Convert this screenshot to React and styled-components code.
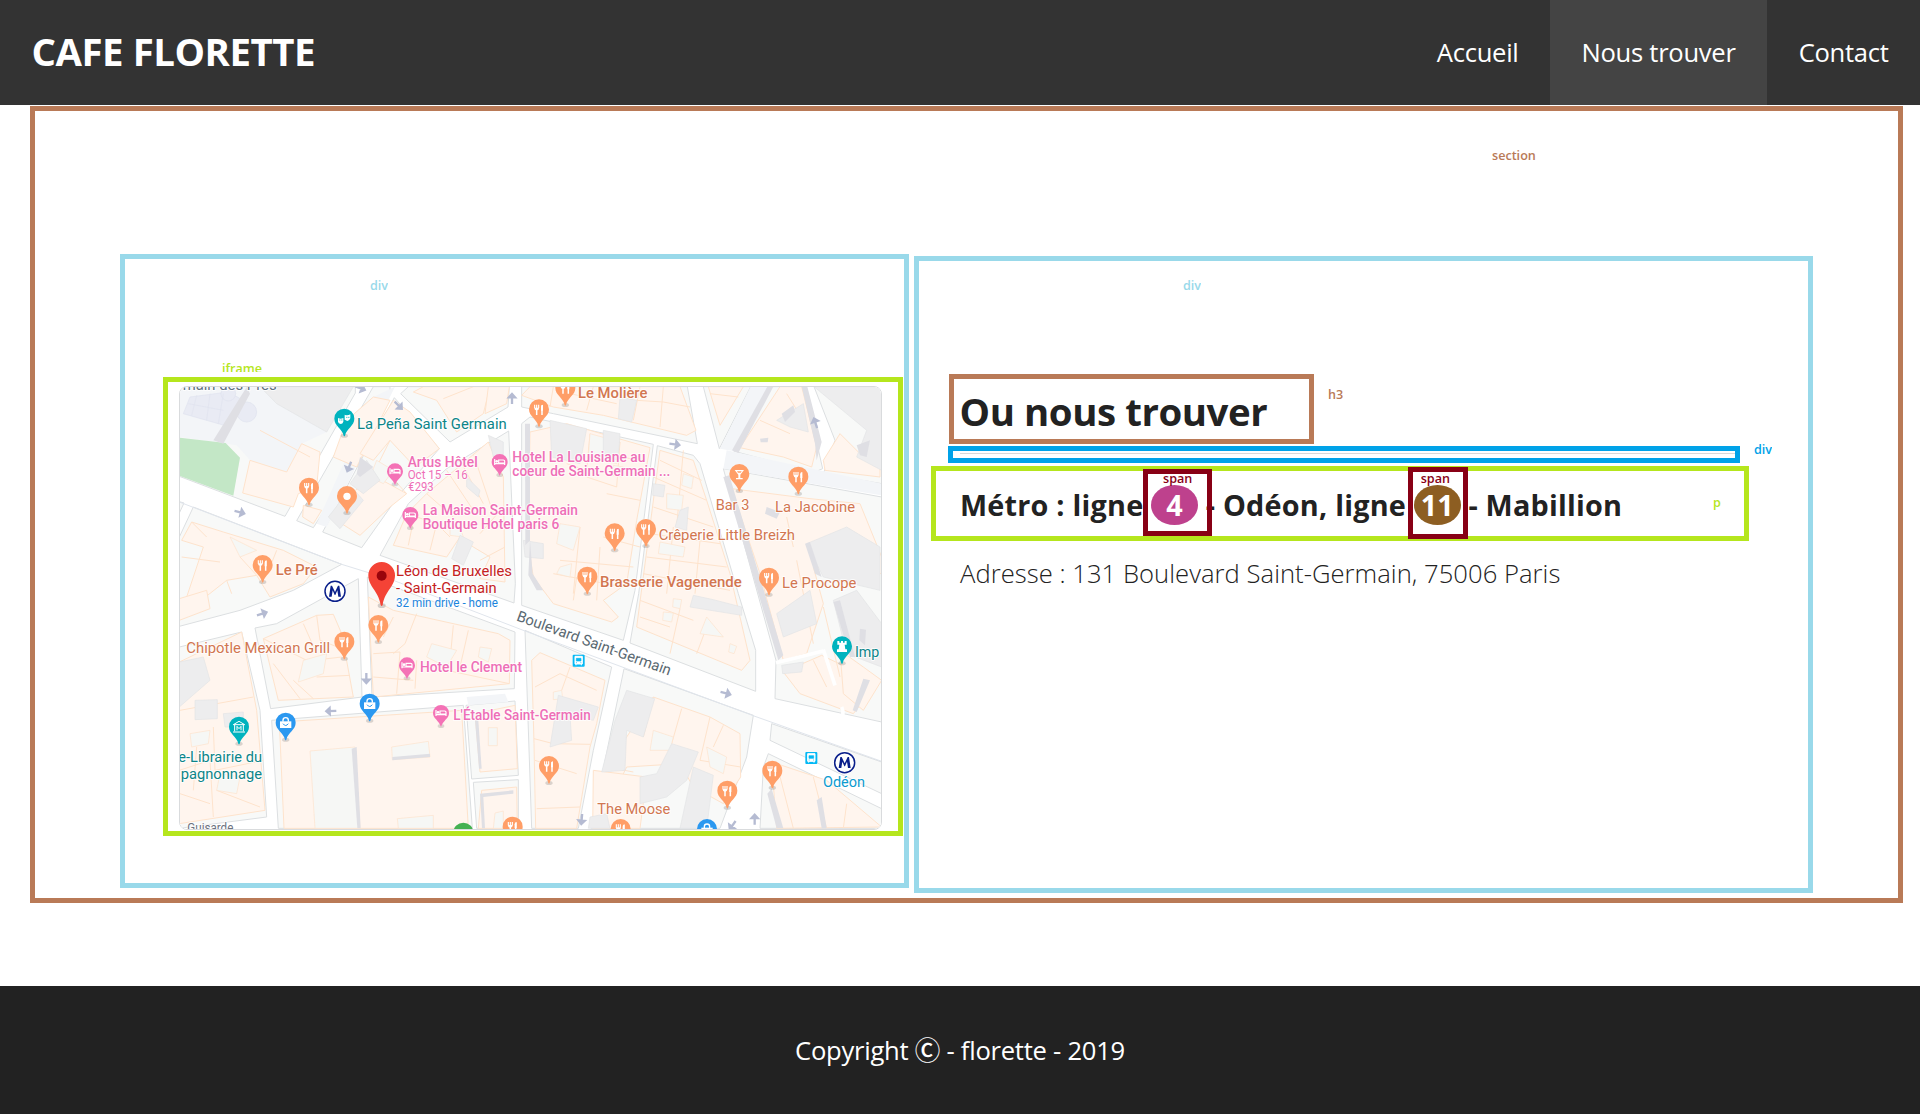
import React from "react";
import styled, { createGlobalStyle } from "styled-components";

const color = {
  brown: "#b97a57",
  sky: "#99d9ea",
  lime: "#b5e61d",
  blue: "#00a2e8",
  wine: "#880015",
};

const GlobalStyle = createGlobalStyle`
  *, *::before, *::after { box-sizing: border-box; }
  body {
    margin: 0;
    background: #fff;
    color: #222;
    font-family: "Open Sans", "Noto Sans", sans-serif;
    font-size: 25.6px;
  }
`;

const Page = styled.div`
  display: flex;
  flex-direction: column;
  height: 1114px;
  overflow: hidden;
`;

const Header = styled.header`
  display: flex;
  justify-content: space-between;
  height: 105px;
  flex: none;
  background: #333;
  color: #fff;
`;

const Logo = styled.h1`
  margin: 0;
  padding-left: 31.5px;
  font-size: 38.4px;
  letter-spacing: -0.47px;
  line-height: 103px;
`;

const Nav = styled.nav`
  display: flex;
`;

const NavLink = styled.a`
  padding: 0 31.4px 0 31.6px;
  letter-spacing: -0.28px;
  line-height: 106px;
  color: #fff;
  background: ${(p) => (p.$active ? "#444" : "transparent")};
`;

const Frame = styled.div`
  position: relative;
  border: 5px solid ${(p) => color[p.$tone]};
`;

const Section = styled(Frame).attrs({ as: "section" })`
  display: flex;
  align-items: flex-start;
  gap: 5px;
  width: 1873px;
  height: 797px;
  flex: none;
  margin: 1px 0 0 30px;
  padding: 143px 85px 0;
`;

const MapColumn = styled(Frame)`
  width: 789px;
  height: 634px;
  padding: 118px 0 0 38px;
`;

const InfoColumn = styled(Frame)`
  width: 899px;
  height: 637px;
  margin-top: 2px;
  padding: 113px 0 0 12px;
`;

const MapFrame = styled(Frame)`
  width: 740px;
  height: 459px;
  padding: 4px 11px;
`;

const MapCanvas = styled.svg`
  display: block;
  width: 703px;
  height: 444px;
  border: 1px solid #d9dbdd;
  border-radius: 8px;
  font-family: Roboto, sans-serif;
`;

const Title = styled(Frame).attrs({ as: "h3" })`
  width: 365px;
  height: 70px;
  margin: 0 0 0 18px;
  padding-left: 5.5px;
  font-size: 38.4px;
  letter-spacing: -0.42px;
  line-height: 64px;
`;

const RuleBox = styled(Frame)`
  width: 792px;
  height: 17px;
  margin: 2px 0 0 17px;
  padding: 2px 0 0 7px;
`;

const Rule = styled.div`
  height: 1px;
  background: #d8d8d8;
`;

const Metro = styled(Frame).attrs({ as: "p" })`
  width: 818px;
  height: 75px;
  margin: 3px 0 0;
  padding-left: 24px;
  font-size: 28.8px;
  font-weight: 700;
  letter-spacing: 0.22px;
  line-height: 67px;
  white-space: pre;
`;

const Line = styled.span`
  position: relative;
  display: inline-block;
  width: 47px;
  height: 40px;
  border-radius: 50%;
  background: ${(p) => p.$bg};
  color: #fff;
  line-height: 40px;
  letter-spacing: 0;
  text-align: center;
`;

const LineFrame = styled.span`
  position: absolute;
  left: ${(p) => p.$box[0]}px;
  top: ${(p) => p.$box[1]}px;
  width: ${(p) => p.$box[2]}px;
  height: ${(p) => p.$box[3]}px;
  border: 5px solid ${color.wine};
`;

const Tag = styled.span`
  position: absolute;
  left: ${(p) => p.$x}px;
  top: ${(p) => p.$y}px;
  height: ${(p) => p.$h || 18}px;
  overflow: hidden;
  color: ${(p) => color[p.$tone]};
  font-size: 12.6px;
  font-weight: 650;
  letter-spacing: 0;
  line-height: 18px;
  white-space: nowrap;
`;

const Address = styled.p`
  margin: 15px 0 0 29px;
  font-weight: 340;
  letter-spacing: 0.04px;
  line-height: 36px;
`;

const Footer = styled.footer`
  height: 128px;
  margin-top: 83px;
  flex: none;
  background: #222;
  color: #fff;
  letter-spacing: -0.26px;
  line-height: 130px;
  text-align: center;
`;

const CopyMark = styled.span`
  font-family: "Noto Sans CJK JP", "DejaVu Sans", sans-serif;
  font-weight: 500;
  line-height: 1;
`;

/* Map geometry: every unit is a third of a CSS pixel. */
const blocks = [
  "58,79 586,79 586,98 375,468 58,348",
  "640,79 690,79 690,100 500,440 460,502 410,481",
  "703,112 838,265 720,400 605,562 488,515",
  "745,79 1048,79 1044,140 870,245 722,100",
  "1046,212 1066,670 1062,728 660,585 745,430 860,325",
  "100,440 545,612 400,690 240,750 58,798 58,530",
  "58,424 72,428 58,458",
  "285,803 350,790 595,655 606,1010 332,1045",
  "58,860 245,815 300,1050 320,1370 58,1404",
  "622,650 1065,815 1063,985 636,1010",
  "335,1080 910,1035 937,1404 355,1404",
  "918,1035 1065,1022 1075,1245 935,1256",
  "940,1266 1075,1258 1075,1404 950,1404",
  "1095,810 1355,920 1300,1170 1255,1404 1115,1404",
  "1392,925 1780,1065 1760,1190 1680,1404 1293,1404",
  "1085,190 1110,170 1480,252 1425,690 1390,840 1085,735",
  "1492,256 1600,285 1620,310 1735,700 1787,870 1787,993 1410,848 1436,700",
  "1085,79 1582,79 1612,250 1180,160 1085,140",
  "1630,79 1772,79 1678,265",
  "1720,272 1828,79 1932,79 1988,325 1960,337",
  "1962,79 2165,79 2165,370 1990,340 2025,240",
  "1690,325 2165,410 2165,1085 1845,1015 1848,900",
  "1835,1090 2165,1205 2165,1300 1830,1140",
  "1825,1180 2165,1345 2165,1404 1800,1404 1810,1220",
];

const buildings = [
  "270,300 380,335 425,250 480,275 470,380 415,400 400,440 248,398",
  "640,110 690,120 590,320 520,290 560,180",
  "750,155 838,265 765,320 690,240 640,300 600,280 700,120",
  "640,345 740,400 690,440 600,525 545,490 575,400",
  "430,435 485,450 460,490 428,470",
  "790,79 990,79 970,160 890,215 830,120 760,95",
  "985,79 1048,79 1040,130 975,160",
  "985,245 1030,350 1035,665 960,655 990,590 940,560 900,530 860,590 700,555 740,460 800,400",
  "95,485 190,515 370,570 470,620 430,670 330,710 290,645 200,660 60,770 130,560 65,540",
  "58,715 140,690 150,745 58,780",
  "310,835 470,765 520,762 545,820 580,1010 355,1020",
  "625,710 700,750 1015,820 1050,840 1048,970 640,1010",
  "58,905 245,815 290,1050 315,1350 58,1390",
  "358,1085 905,1050 925,1404 372,1404",
  "945,1060 1065,1035 1072,1225 960,1235",
  "965,1290 1070,1280 1072,1404 955,1404",
  "1115,900 1140,877 1335,960 1310,1090 1290,1160 1250,1404 1127,1404 1122,1150",
  "1480,1010 1650,1070 1740,1120 1742,1250 1690,1330 1600,1280 1560,1210 1400,1220 1310,1404 1340,1220",
  "1300,1230 1460,1250 1440,1404 1298,1404",
  "1110,215 1220,190 1470,262 1430,480 1400,670 1330,720 1375,770 1355,785 1180,730 1120,650 1105,560",
  "1500,270 1600,300 1640,420 1710,640 1770,900 1745,930 1430,800",
  "1110,79 1560,79 1608,210 1580,225 1330,165 1180,140 1085,105",
  "1645,79 1750,79 1680,195",
  "1740,262 1860,79 1925,79 1970,260 1955,320 1870,290",
  "1715,385 1950,415 2100,430 2165,590 2165,640 1960,620 1990,730 1940,880 1870,900 1800,640",
  "1870,935 1985,885 2080,930 2160,960 2080,1060 1920,1000",
  "1835,1205 2000,1260 2165,1400 1850,1404",
  "1990,300 2040,220 2110,290 2160,310 2160,350 1995,330",
  "2040,870 2110,920 2165,960 2110,1050 2050,1000",
];

/* Courtyards cut out of the buildings. */
const yards = [
  "430,900 500,880 490,940 415,965",
  "815,850 890,870 860,920 800,890",
  "960,860 995,865 985,905 955,890",
  "450,1172 585,1160 600,1404 465,1404",
  "695,1160 805,1143 810,1190 697,1198",
  "712,1375 820,1365 820,1404 715,1404",
  "985,1102 1012,1102 1012,1156 985,1156",
  "1005,1358 1030,1352 1030,1404 1000,1404",
  "1180,995 1205,990 1208,1015 1180,1018",
  "1200,620 1235,610 1230,650 1190,640",
  "1290,220 1380,245 1370,310 1285,290",
  "1360,315 1390,320 1385,350 1355,345",
  "1520,400 1570,405 1565,450 1520,445",
  "1570,340 1600,350 1595,385 1565,375",
  "1500,545 1575,560 1570,590 1495,580",
  "1640,770 1690,830 1620,820",
  "1540,715 1565,718 1560,745 1538,740",
  "1510,755 1540,758 1535,785 1508,780",
  "1710,850 1730,858 1722,880 1706,875",
  "1480,1110 1540,1130 1530,1170 1470,1170",
  "1640,1160 1700,1190 1690,1240 1650,1220",
  "1200,490 1260,500 1240,570 1190,550",
  "90,1120 150,1110 145,1150 95,1160",
  "180,1240 240,1250 230,1300 170,1290",
  "870,500 900,500 910,530 870,525",
  "210,530 290,570 240,590",
  "650,300 700,330 670,370 630,350",
];

const grey = [
  "300,79 580,79 500,215 350,130",
  "985,225 1030,245 1030,285 1000,290",
  "920,350 960,390 955,410 920,380",
  "900,525 940,545 910,615 875,595",
  "58,905 130,890 150,960 58,1040",
  "105,1020 172,1018 172,1075 105,1078",
  "190,1060 250,1055 250,1100 195,1100",
  "620,300 660,360 610,400 570,370",
  "505,470 575,380 610,420 540,505",
  "1195,1005 1315,1040 1300,1080 1230,1065 1235,1140 1170,1160",
  "1400,990 1484,1015 1450,1130 1400,1110 1395,1230 1325,1235 1365,1080",
  "1535,1150 1615,1175 1580,1260 1520,1310 1440,1330 1440,1250 1490,1240",
  "1600,1220 1660,1245 1640,1404 1560,1404",
  "1290,1370 1340,1360 1350,1404 1285,1404",
  "1600,705 1660,718 1745,740 1745,765 1590,740",
  "1380,110 1430,120 1415,185 1375,175",
  "1330,210 1380,220 1375,300 1330,285",
  "1480,370 1515,375 1510,410 1478,405",
  "1560,450 1585,440 1580,510 1545,500",
  "1170,180 1280,205 1260,310 1175,290",
  "1090,540 1150,550 1150,595 1095,590",
  "1962,79 2165,79 2165,330 2090,290 2120,210",
  "1940,550 2060,500 2160,560 2160,690 1990,650",
  "1850,760 1950,690 1970,790 1870,830",
  "1865,915 1930,905 1925,935 1868,940",
  "2020,720 2090,690 2165,790 2165,920 2060,880",
  "1850,180 1930,130 1945,215 1890,200",
];

const seams = [
  "M300,210 L450,290 M690,240 L640,340 M740,400 L690,345 M850,115 L940,79",
  "M740,460 L830,490 L870,530 M800,400 L880,470 M860,330 L940,450 M900,300 L970,430 M940,280 L1000,460 M1030,440 L960,520 M1035,560 L960,600 M760,480 L745,555 M830,490 L810,570",
  "M65,590 L180,605 M240,590 L290,645 M95,485 L140,530 M350,570 L330,620 M200,660 L215,700",
  "M310,835 L440,900 M430,790 L470,880 M470,765 L480,840 L560,870 M400,960 L460,1015 M460,900 L545,890 M470,950 L570,945 M340,910 L420,1015",
  "M700,770 L670,830 M770,760 L735,850 L700,880 M880,795 L870,900 M925,810 L900,920 M640,880 L720,875 L710,1000 M640,950 L760,960 M770,900 L765,985 M860,930 L1048,970",
  "M58,1230 L150,1200 L160,1370 M160,1100 L165,1230 L310,1200 M170,1290 L300,1340 M60,1050 L280,1010 M60,1300 L150,1330 M110,1160 L100,1290",
  "M1125,980 L1200,940 L1310,990 M1122,1135 L1180,1150 L1290,1152 M1125,1200 L1250,1240 M1130,1345 L1260,1340 M1205,990 L1230,920",
  "M1480,1010 L1450,1130 M1565,1045 L1535,1150 M1650,1070 L1620,1200 L1742,1220 M1690,1095 L1660,1160 M1340,1220 L1420,1235",
  "M1290,220 L1280,330 L1220,310 M1380,245 L1370,380 L1280,350 M1430,300 L1350,280 M1440,420 L1340,400 M1440,560 L1330,530 M1420,620 L1200,600 M1260,500 L1240,700 M1320,560 L1310,720 M1180,640 L1390,680 M1240,720 L1250,650",
  "M1500,300 L1625,360 M1480,350 L1640,420 M1480,440 L1660,500 M1470,520 L1680,550 M1460,590 L1700,620 M1450,640 L1710,690 M1440,720 L1600,780 M1570,270 L1550,500 M1540,500 L1520,700 M1620,540 L1605,700 M1560,745 L1530,880 M1640,800 L1610,880 M1440,770 L1530,800",
  "M1180,79 L1170,140 M1300,79 L1280,150 M1440,79 L1420,180 M1510,79 L1500,200 M1510,125 L1590,140 M1430,120 L1510,125 M1230,100 L1370,130",
  "M1650,100 L1735,110 M1800,180 L1890,220 M1880,100 L1930,180 M1880,470 L1900,560 M1910,600 L1960,850 M1990,740 L2040,950 M1960,900 L2000,980",
  "M1850,1210 L1900,1404 M1960,1250 L2000,1404 M2060,1330 L2050,1404",
];

/* Long thin wall shadows. */
const shades = [
  "1095,190 1110,190 1110,540 1096,555",
  "1110,540 1118,640 1150,690 1130,690 1105,645",
  "1690,350 1708,345 1870,885 1855,900",
  "1716,270 1822,79 1840,79 1735,278",
  "1925,79 1942,79 1985,245 1970,300 1965,250",
  "945,1080 955,1080 965,1225 957,1225",
  "960,1300 1060,1290 1060,1300 970,1310 975,1404 966,1404",
  "575,1165 590,1160 602,1404 592,1404",
  "697,1190 810,1180 810,1190 697,1200",
  "1822,1300 1835,1285 1870,1404 1850,1404",
  "1970,1320 1985,1310 2000,1404 1985,1404",
  "2110,955 2130,960 2090,1055 2078,1050",
  "1800,235 1825,232 1823,246 1802,246",
  "1865,160 1900,135 1905,155 1875,185",
  "2090,255 2130,240 2120,290 2100,285",
  "1820,440 1860,455 1850,475 1815,460",
  "1935,550 1950,545 1985,650 1965,640",
  "2020,725 2040,720 2085,890 2070,890",
  "2100,805 2118,808 2115,855 2098,840",
  "600,290 640,320 600,350 590,340",
  "160,240 260,80 270,100 190,250",
];

const arrows = [
  [602, 84, 20], [716, 136, 45], [567, 320, 112], [240, 456, 15],
  [1056, 114, -90], [307, 760, -18], [619, 955, 90], [512, 1052, 178],
  [1545, 252, 8], [1966, 187, -108], [1698, 999, 15], [1265, 1378, 95],
  [1784, 1376, -90], [1717, 1396, 125],
];

const PIN = "#ff9e67";
const PINK = "#f472b6";
const TEAL = "#00b3be";
const BLUE = "#2b98f0";

const pins = [
  [447, 383, PIN, "food"], [561, 408, PIN, "dot"], [308, 615, PIN, "food"],
  [553, 176, TEAL, "mask"], [1137, 148, PIN, "food"], [1216, 84, PIN, "food"],
  [1738, 342, PIN, "bar"], [1915, 350, PIN, "food"], [1458, 507, PIN, "food"],
  [1364, 520, PIN, "food"], [1282, 650, PIN, "food"], [1827, 653, PIN, "food"],
  [655, 795, PIN, "food"], [553, 845, PIN, "food"], [629, 1031, BLUE, "bag"],
  [377, 1088, BLUE, "bag"], [237, 1100, TEAL, "museum"], [2046, 859, TEAL, "rook"],
  [1167, 1218, PIN, "food"], [1837, 1232, PIN, "food"], [1702, 1292, PIN, "food"],
  [1382, 1407, PIN, "food"], [1058, 1400, PIN, "food"], [1641, 1407, BLUE, "bag"],
  [910, 1418, "#45b152", "dot"],
];

const hotels = [[705, 333], [1019, 305], [751, 464], [741, 915], [843, 1058]];

const ORANGE_TEXT = "#d27650";
const PINK_TEXT = "#ee6fb7";
const TEAL_TEXT = "#0c8589";

/* [text, x, baseline, width, size, colour, weight] */
const labels = [
  ["La Peña Saint Germain", 591, 207, 449, 45, TEAL_TEXT, 400],
  ["Artus Hôtel", 743, 321, 210, 42, PINK_TEXT, 500],
  ["Oct 15 – 16", 743, 357, 180, 38, PINK_TEXT, 400],
  ["€293", 745, 392, 76, 38, PINK_TEXT, 400],
  ["Hotel La Louisiane au", 1057, 306, 399, 42, PINK_TEXT, 500],
  ["coeur de Saint-Germain ...", 1057, 346, 474, 42, PINK_TEXT, 500],
  ["La Maison Saint-Germain", 788, 464, 466, 43, PINK_TEXT, 500],
  ["Boutique Hotel paris 6", 788, 507, 410, 43, PINK_TEXT, 500],
  ["Le Pré", 347, 645, 126, 45, ORANGE_TEXT, 500],
  ["Léon de Bruxelles", 708, 648, 348, 45, "#c5221f", 400],
  ["- Saint-Germain", 708, 699, 302, 45, "#c5221f", 400],
  ["32 min drive - home", 708, 741, 306, 36, "#1a84dc", 400],
  ["Le Molière", 1254, 112, 208, 44, ORANGE_TEXT, 500],
  ["Bar 3", 1667, 449, 101, 45, ORANGE_TEXT, 400],
  ["La Jacobine", 1845, 456, 240, 45, ORANGE_TEXT, 400],
  ["Crêperie Little Breizh", 1496, 538, 409, 45, ORANGE_TEXT, 400],
  ["Brasserie Vagenende", 1320, 681, 425, 44, ORANGE_TEXT, 500],
  ["Le Procope", 1866, 683, 223, 45, ORANGE_TEXT, 400],
  ["Chipotle Mexican Grill", 79, 877, 431, 45, ORANGE_TEXT, 400],
  ["Hotel le Clement", 780, 935, 306, 43, PINK_TEXT, 500],
  ["L'Étable Saint-Germain", 880, 1078, 412, 43, PINK_TEXT, 500],
  ["e-Librairie du", 55, 1206, 251, 45, TEAL_TEXT, 400],
  ["pagnonnage", 62, 1257, 244, 45, TEAL_TEXT, 400],
  ["The Moose", 1312, 1362, 219, 45, ORANGE_TEXT, 400],
  ["Imp", 2085, 890, 73, 45, TEAL_TEXT, 400],
  ["Odéon", 1989, 1281, 126, 45, "#0c9bd0", 400],
  ["main des Prés", 68, 90, 282, 44, "#607080", 400],
  ["Guisarde", 82, 1416, 138, 38, "#6b7280", 400],
];

const glyphs = {
  food: (
    <g fill="none" stroke="#fff">
      <path d="M-13,-15 V-5 M-7,-15 V-5 M-1,-15 V-5" strokeWidth="3.4" />
      <path d="M-14.5,-6 H0.5 Q0,2 -7,2 Q-14,2 -14.5,-6 Z" fill="#fff" stroke="none" />
      <path d="M-7,0 V16 M9,16 V-13" strokeWidth="4.5" />
      <path d="M6,3 V-8 Q7,-15 12,-15 V3 Z" fill="#fff" stroke="none" />
    </g>
  ),
  dot: <circle r="11" fill="#fff" />,
  bar: <path d="M-14,-13 H14 L3,1 V11 H10 V15 H-10 V11 H-3 V1 Z M-7,-9 L-4,-5 H4 L7,-9 Z" fill="#fff" fillRule="evenodd" />,
  mask: (
    <g fill="#fff">
      <path d="M-19,-3 Q-11,1 -3,-3 V8 Q-5,15 -11,15 Q-18,14 -19,8 Z" />
      <path d="M1,-13 Q9,-9 18,-14 V-2 Q16,5 9,6 L1,2 Z" />
      <path d="M-15,3 H-12 M-9,3 H-6 M6,-5 H9 M12,-5 H15" stroke={TEAL} strokeWidth="3" />
    </g>
  ),
  bag: (
    <g fill="none">
      <path d="M-17,-5 H17 V15 H-17 Z" fill="#fff" />
      <path d="M-8,-4 V-8 A8,8 0 0 1 8,-8 V-4" stroke="#fff" strokeWidth="4" />
      <path d="M-8,2 Q0,13 8,2" stroke={BLUE} strokeWidth="3" />
    </g>
  ),
  museum: (
    <g fill="none" stroke="#fff" strokeWidth="3">
      <path d="M-17,-7 L0,-17 L17,-7 Z M-13,-7 V13 M13,-7 V13 M-18,15 H18 M-6,10 V-2 L0,5 L6,-2 V10" />
    </g>
  ),
  rook: <path d="M-14,-17 H-8 V-12 H-3 V-17 H3 V-12 H8 V-17 H14 V-6 H8 L10,8 H15 V16 H-15 V8 H-10 L-8,-6 H-14 Z" fill="#fff" />,
};

function Pin({ x, y, fill, glyph }) {
  return (
    <g transform={`translate(${x} ${y})`}>
      <ellipse cy="50" rx="11" ry="6" fill="#555" opacity=".22" />
      <path d="M0,-31 A30,30 0 0 1 30,-1 C30,21 7,27 2,50 Q0,54 -2,50 C-7,27 -30,21 -30,-1 A30,30 0 0 1 0,-31 Z" fill={fill} />
      {glyphs[glyph]}
    </g>
  );
}

function HotelPin({ x, y }) {
  return (
    <g transform={`translate(${x} ${y})`}>
      <ellipse cy="39" rx="10" ry="6" fill="#555" opacity=".2" />
      <path d="M0,-24 A24,24 0 0 1 24,0 C24,17 6,22 0,42 C-6,22 -24,17 -24,0 A24,24 0 0 1 0,-24 Z" fill={PINK} />
      <path d="M-15,-9 V9 M-15,5 H15 M15,9 V-3 Q15,-6 11,-6 H-3 V3 H15" fill="none" stroke="#fff" strokeWidth="3.5" />
      <circle cx="-9" cy="-2" r="4" fill="#fff" />
    </g>
  );
}

function MetroMark({ x, y }) {
  return (
    <g transform={`translate(${x} ${y})`}>
      <circle r="34" fill="#fff" />
      <circle r="30" fill="#fff" stroke="#0a1f8a" strokeWidth="4.5" />
      <path d="M-18,16 L-13,-17 H-9 L0,2 L9,-17 H13 L18,16 H10 L7,-3 L1,11 H-1 L-7,-3 L-10,16 Z" fill="#0a1f8a" />
    </g>
  );
}

function BusMark({ x, y }) {
  return (
    <g transform={`translate(${x} ${y})`}>
      <rect x="-18" y="-18" width="36" height="36" rx="3" fill="#04b9f5" />
      <path d="M-11,-13 H11 V10 H-11 Z M-8,10 V14 M8,10 V14" fill="#fff" stroke="#fff" strokeWidth="3" />
      <path d="M-7,-7 H7 V1 H-7 Z M-8,6 H-5 M5,6 H8" fill="#04b9f5" stroke="#04b9f5" strokeWidth="2" />
    </g>
  );
}

function StreetMap() {
  return (
    <MapCanvas viewBox="60 80 2103 1326" preserveAspectRatio="none">
      <rect x="58" y="78" width="2110" height="1332" fill="#fff" />
      <g fill="#f8f9f8" stroke="#dcdfe1" strokeWidth="3">
        {blocks.map((p) => <polygon key={p} points={p} />)}
      </g>
      <g fill="#f3f5f8">
        <polygon points="58,79 330,79 500,215 425,250 380,335 270,300 230,255 58,230" />
        <polygon points="1680,265 1772,79 1828,79 1720,272" />
        <polygon points="640,110 705,79 500,500 470,490" />
        <polygon points="1690,325 1700,270 2165,370 2165,405" />
        <polygon points="920,1010 1035,1000 1045,1025 925,1035" />
      </g>
      <g fill="#e9ebf4" stroke="#dfe3ef" strokeWidth="2">
        <path d="M90,110 L205,95 L250,120 L225,160 L210,200 L70,160 Z" />
        <circle cx="260" cy="155" r="30" />
        <circle cx="205" cy="100" r="22" />
        <path d="M85,130 L190,150 M110,105 L95,165 M150,100 L140,180 M190,100 L175,190" />
      </g>
      <polygon points="58,232 197,248 240,292 220,406 58,346" fill="#c3e7c6" />
      <g fill="#fff5ee" stroke="#fee3cc" strokeWidth="3">
        {buildings.map((p) => <polygon key={p} points={p} />)}
        {seams.map((d) => <path key={d} d={d} fill="none" />)}
      </g>
      <g fill="#f6f7f5" stroke="#fee3cc" strokeWidth="2">
        {yards.map((p) => <polygon key={p} points={p} />)}
      </g>
      <g fill="#ededee" stroke="#e3e4e6" strokeWidth="2">
        {grey.map((p) => <polygon key={p} points={p} />)}
      </g>
      <g fill="#dfdfe4">
        {shades.map((p) => <polygon key={p} points={p} />)}
      </g>
      <g fill="none" stroke="#fff" strokeWidth="11">
        <path d="M1848,907 L1990,872 M1990,868 L2025,975 M2040,1085 Q2055,1060 2045,1040" />
      </g>
      <polyline points="58,425 545,612 700,660 1095,812 1400,925 1785,1068 2165,1203" fill="none" stroke="#e0e5ec" strokeWidth="3" />
      <g fill="none" stroke="#b5bbd2" strokeWidth="7">
        {arrows.map(([x, y, a]) => (
          <path key={`${x}-${y}`} transform={`translate(${x} ${y}) rotate(${a})`} d="M-17,0 H10 M3,-9 L13,0 L3,9 Z" />
        ))}
      </g>
      {pins.map(([x, y, fill, glyph]) => <Pin key={`${x}-${y}`} x={x} y={y} fill={fill} glyph={glyph} />)}
      {hotels.map(([x, y]) => <HotelPin key={x} x={x} y={y} />)}
      <MetroMark x={525} y={693} />
      <MetroMark x={2054} y={1207} />
      <BusMark x={1256} y={901} />
      <BusMark x={1954} y={1193} />
      <ellipse cx="665" cy="736" rx="12" ry="7" fill="#555" opacity=".25" />
      <path d="M665,605 A40,40 0 0 1 705,645 C705,680 675,690 668,734 Q665,740 662,734 C655,690 625,680 625,645 A40,40 0 0 1 665,605 Z" fill="#f44336" />
      <circle cx="665" cy="646" r="15" fill="#99040c" />
      <g stroke="#fff" strokeOpacity=".8" strokeWidth="6" strokeLinejoin="round" paintOrder="stroke">
        {labels.map(([text, x, y, w, size, fill, weight]) => (
          <text key={text} x={x} y={y} textLength={w} lengthAdjust="spacingAndGlyphs" fontSize={size} fontWeight={weight} fill={fill}>
            {text}
          </text>
        ))}
        <text transform="translate(1067 780) rotate(19.8)" textLength="489" lengthAdjust="spacingAndGlyphs" fontSize="45" fill="#5a6972">
          Boulevard Saint-Germain
        </text>
      </g>
    </MapCanvas>
  );
}

export default function App() {
  return (
    <Page>
      <GlobalStyle />
      <Header>
        <Logo>CAFE FLORETTE</Logo>
        <Nav>
          <NavLink>Accueil</NavLink>
          <NavLink $active>Nous trouver</NavLink>
          <NavLink>Contact</NavLink>
        </Nav>
      </Header>
      <Section $tone="brown">
        <Tag $tone="brown" $x={1457} $y={36}>section</Tag>
        <MapColumn $tone="sky">
          <Tag $tone="sky" $x={245} $y={18}>div</Tag>
          <Tag $tone="lime" $x={97} $y={101} $h={12}>iframe</Tag>
          <MapFrame $tone="lime">
            <StreetMap />
          </MapFrame>
        </MapColumn>
        <InfoColumn $tone="sky">
          <Tag $tone="sky" $x={264} $y={16}>div</Tag>
          <Tag $tone="brown" $x={409} $y={125}>h3</Tag>
          <Tag $tone="blue" $x={835} $y={180}>div</Tag>
          <Title $tone="brown">Ou nous trouver</Title>
          <RuleBox $tone="blue">
            <Rule />
          </RuleBox>
          <Metro $tone="lime">
            Métro : ligne{" "}
            <Line $bg="#be418d">
              4
              <LineFrame $box={[-8, -16, 69, 67]} />
              <Tag $tone="wine" $x={12} $y={-15}>span</Tag>
            </Line>
            {" "}- Odéon, ligne{" "}
            <Line $bg="#8d5e22">
              11
              <LineFrame $box={[-6, -18, 60, 72]} />
              <Tag $tone="wine" $x={7} $y={-15}>span</Tag>
            </Line>
            {" "}- Mabillion
            <Tag $tone="lime" $x={777} $y={23}>p</Tag>
          </Metro>
          <Address>Adresse : 131 Boulevard Saint-Germain, 75006 Paris</Address>
        </InfoColumn>
      </Section>
      <Footer>
        Copyright <CopyMark>Ⓒ</CopyMark> - florette - 2019
      </Footer>
    </Page>
  );
}
